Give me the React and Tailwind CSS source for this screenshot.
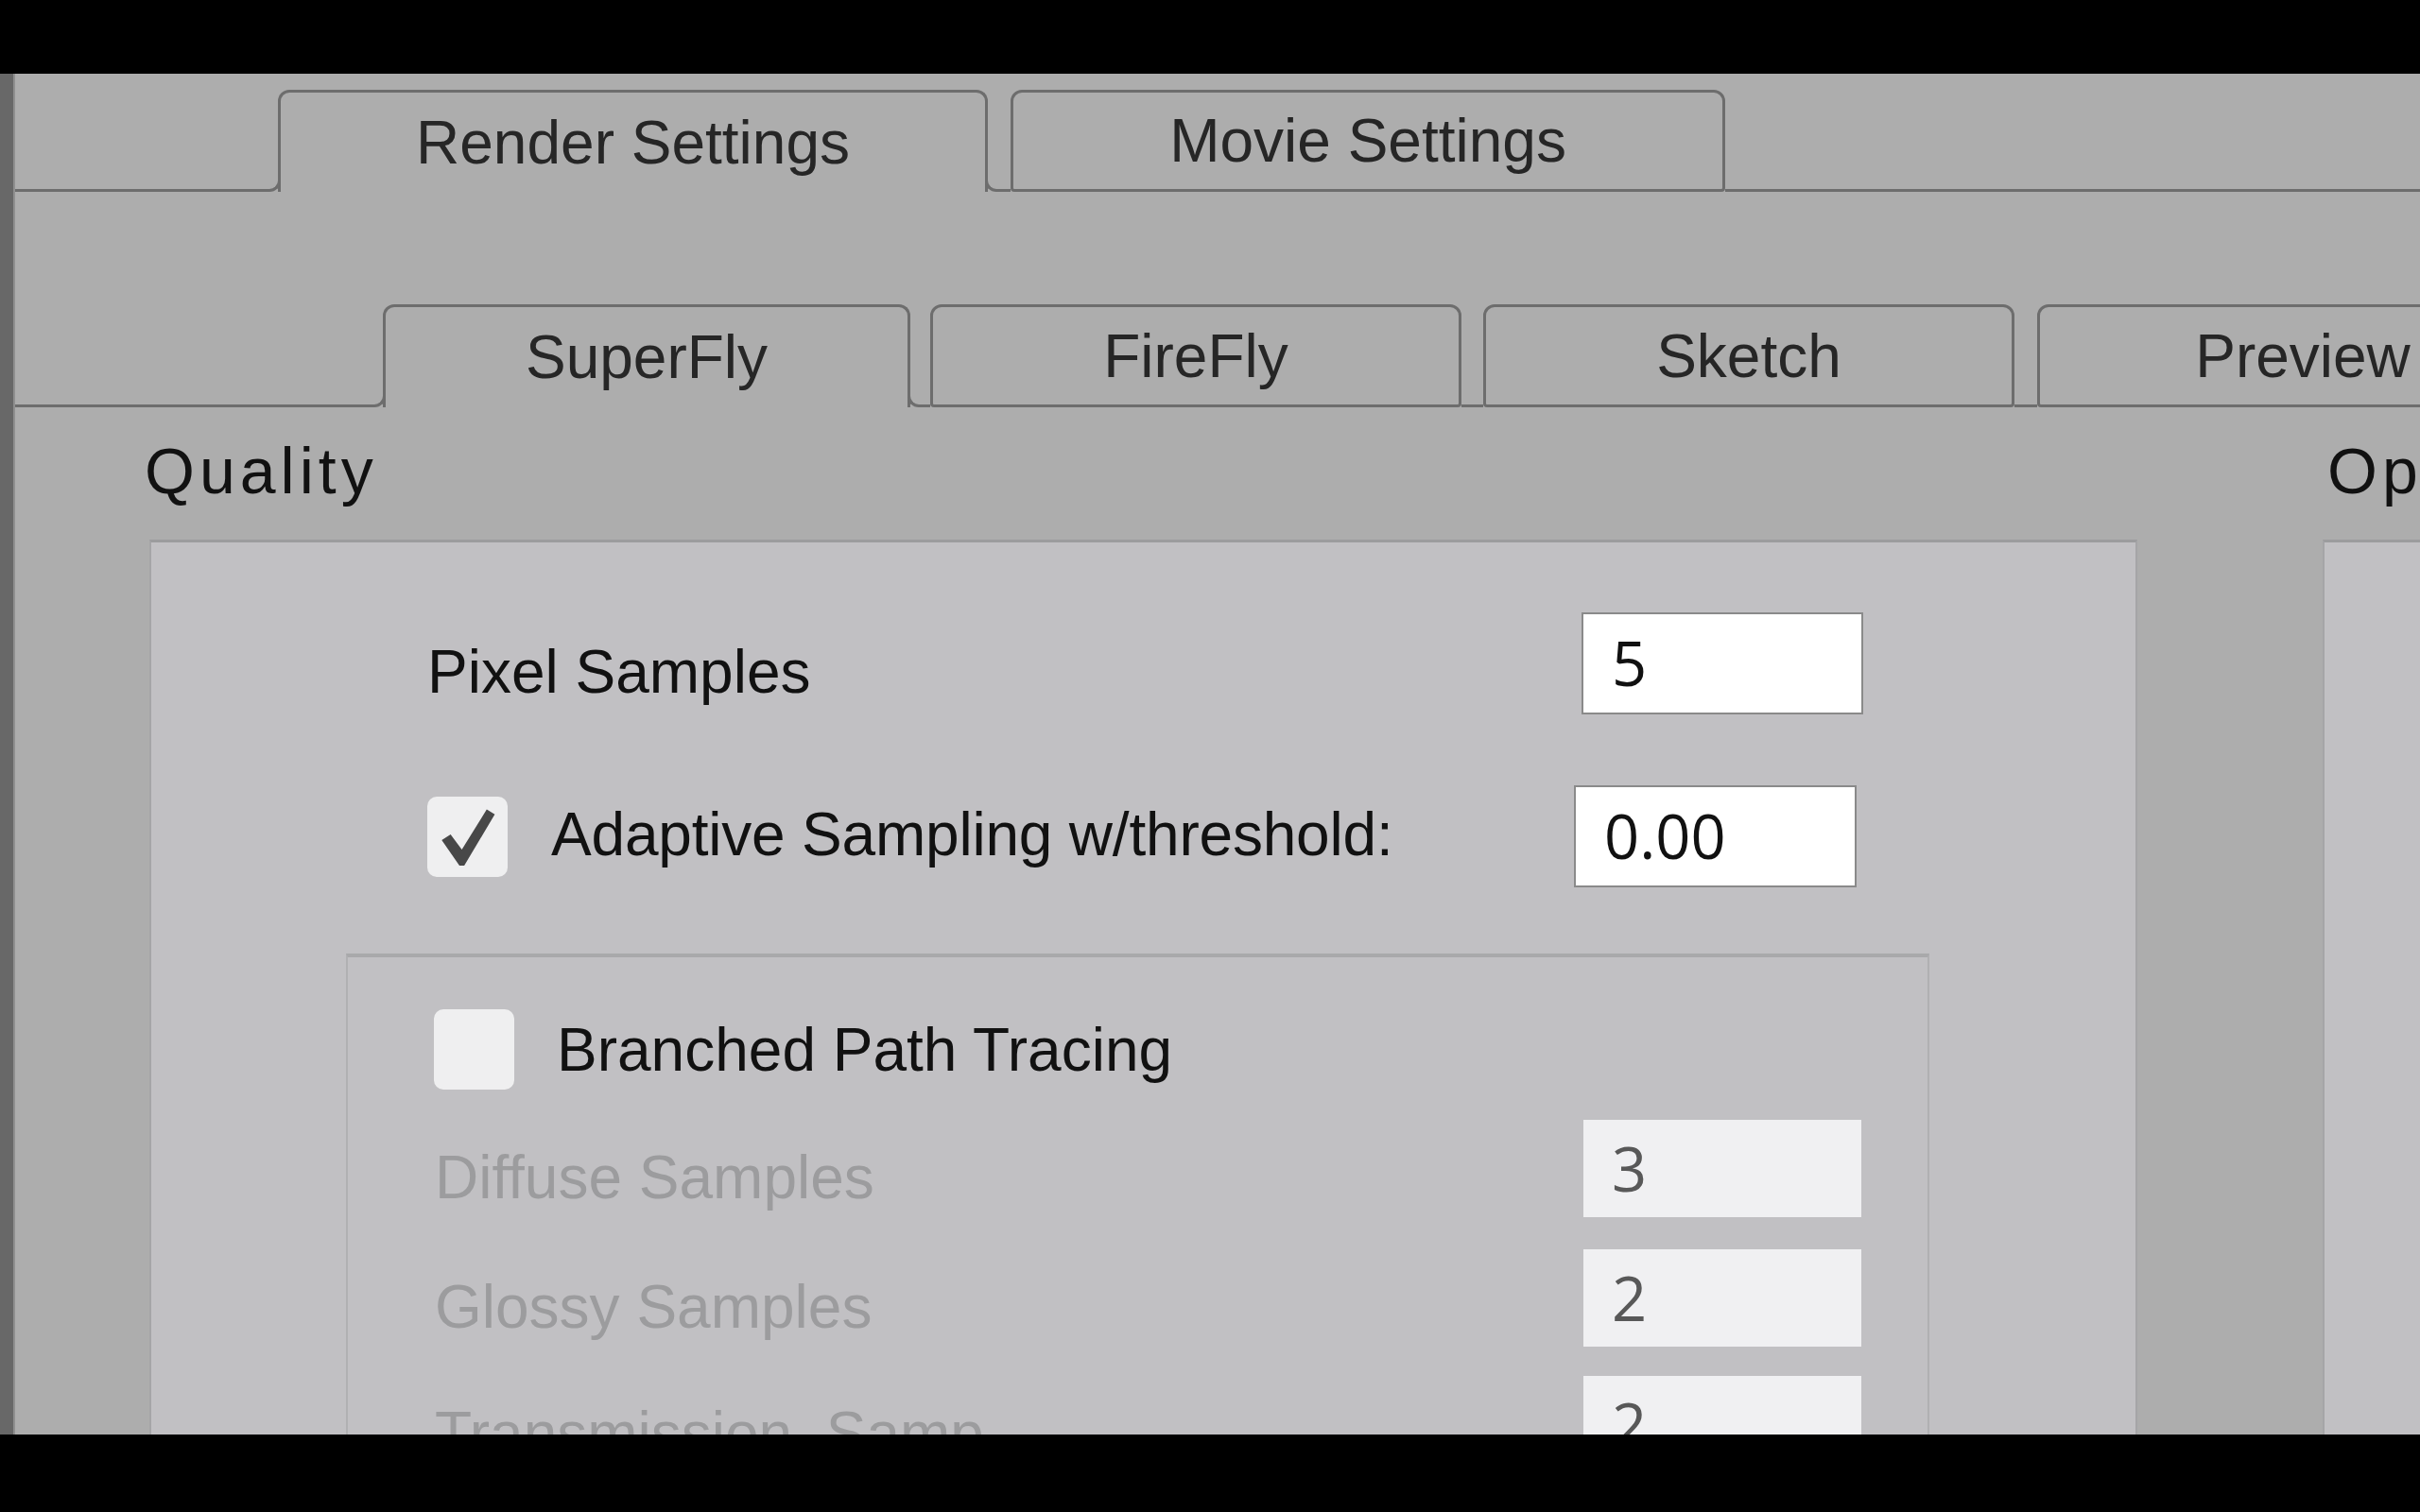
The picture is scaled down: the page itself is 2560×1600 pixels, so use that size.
import React from 'react';

// --- TAB STRIP ---
const LINE = 'border-[#6d6d6d]';

const TabStrip = ({ lead, tabs, className }) => (
  <div className={`flex items-end flex-none overflow-hidden ${className}`}>
    <div className={`${lead} flex-none h-[24px] border-b-[3px] border-r-[3px] ${LINE} rounded-br-[12px] -mr-[3px]`} />
    {tabs.map((t, i) => (
      <React.Fragment key={t.label}>
        {t.active ? (
          <div className={`${t.w} flex-none h-full border-[3px] border-b-0 ${LINE} rounded-t-[12px] flex items-center justify-center text-[64px] text-[#262626]`}>
            {t.label}
          </div>
        ) : (
          <div className={`${t.w} flex-none h-full border-[3px] ${LINE} rounded-t-[12px] rounded-b-[4px] flex items-center justify-center text-[64px] text-[#262626] whitespace-nowrap`}>
            {t.label}
          </div>
        )}
        {i < tabs.length - 1 && (
          t.active ? (
            <div className={`${t.gap} flex-none h-[24px] border-b-[3px] border-l-[3px] ${LINE} rounded-bl-[12px] -ml-[3px]`} />
          ) : (
            <div className={`${t.gap} flex-none h-[3px] bg-[#6d6d6d]`} />
          )
        )}
      </React.Fragment>
    ))}
    <div className="flex-1 min-w-0 h-[3px] bg-[#6d6d6d]" />
  </div>
);

const Check = ({ checked }) => (
  <div className="w-[85px] h-[85px] flex-none rounded-[10px] bg-[#efeff0] flex items-center justify-center">
    {checked && (
      <svg viewBox="0 0 100 100" className="w-[85px] h-[85px]">
        <path d="M18 54 L29 47 L43 66 L74 16 L84 22 L46 86 L40 86 Z" fill="#484848" />
      </svg>
    )}
  </div>
);

const Field = ({ value, w, h, disabled }) => (
  <div
    className={`${w} ${h} flex-none flex items-center pl-[30px] text-[65px] [font-family:'Open_Sans',sans-serif] ${
      disabled ? 'bg-[#f0f0f2] text-[#585858]' : 'bg-white border-2 border-[#8a8a8a] text-[#111]'
    }`}
  >
    {value}
  </div>
);

export default function App() {
  const row1 = [
    { label: 'Render Settings', w: 'w-[751px]', gap: 'w-[27px]', active: true },
    { label: 'Movie Settings', w: 'w-[756px]' },
  ];
  const row2 = [
    { label: 'SuperFly', w: 'w-[558px]', gap: 'w-[24px]', active: true },
    { label: 'FireFly', w: 'w-[562px]', gap: 'w-[23px]' },
    { label: 'Sketch', w: 'w-[562px]', gap: 'w-[24px]' },
    { label: 'Preview', w: 'w-[562px]' },
  ];

  return (
    <div className="w-[2560px] h-[1600px] bg-black flex flex-col overflow-hidden [font-family:'Liberation_Sans',Arial,sans-serif]">
      <div className="h-[78px] flex-none bg-black" />

      <div className="h-[1440px] flex-none flex bg-[#adadad] overflow-hidden">
        <div className="w-[16px] flex-none bg-[#686868] border-r-2 border-[#8f8f8f]" />

        <div className="flex-1 min-w-0 flex flex-col">
          <TabStrip lead="w-[281px]" tabs={row1} className="h-[108px] mt-[17px]" />
          <TabStrip lead="w-[392px]" tabs={row2} className="h-[109px] mt-[119px]" />

          <div className="flex mt-[33px] pl-[137px]">
            {/* Quality column */}
            <div className="flex flex-col flex-none w-[2108px]">
              <h2 className="text-[68px] leading-none tracking-[5px] text-[#111]">Quality</h2>
              <div className="ml-[5px] mt-[39px] w-[2103px] h-[1100px] bg-[#c1c0c3] border-t-[3px] border-t-[#9c9c9e] border-x-2 border-x-[#a5a5a7] flex flex-col text-[64px] text-[#111]">
                <div className="mt-[74px] h-[108px] w-[1811px] pl-[292px] flex items-center justify-between">
                  <span className="pt-[18px]">Pixel Samples</span>
                  <Field value="5" w="w-[298px]" h="h-[108px]" />
                </div>

                <div className="mt-[75px] h-[108px] w-[1804px] pl-[292px] flex items-center">
                  <Check checked />
                  <span className="ml-[46px] -mt-[4px] tracking-[-0.2px]">Adaptive Sampling w/threshold:</span>
                  <div className="flex-1" />
                  <Field value="0.00" w="w-[299px]" h="h-[108px]" />
                </div>

                {/* Branched path tracing group */}
                <div className="mt-[70px] ml-[206px] w-[1675px] h-[700px] border-t-[4px] border-t-[#a9a9ab] border-x-2 border-x-[#b0b0b2] flex flex-col">
                  <div className="mt-[55px] h-[85px] pl-[91px] flex items-center">
                    <Check />
                    <span className="ml-[45px]">Branched Path Tracing</span>
                  </div>
                  {[
                    ['Diffuse Samples', '3', 'mt-[32px]'],
                    ['Glossy Samples', '2', 'mt-[34px]'],
                    ['Transmission  Samp', '2', 'mt-[31px]'],
                  ].map(([label, v, mt]) => (
                    <div key={label} className={`${mt} h-[103px] w-[1601px] pl-[92px] flex items-center justify-between`}>
                      <span className="pt-[18px] whitespace-pre text-[#9c9c9e]">{label}</span>
                      <Field value={v} w="w-[294px]" h="h-[103px]" disabled />
                    </div>
                  ))}
                </div>
              </div>
            </div>

            {/* Options column */}
            <div className="flex flex-col flex-none w-[500px] ml-[196px]">
              <h2 className="pl-[5px] text-[68px] leading-none tracking-[5px] text-[#111] whitespace-nowrap">Options</h2>
              <div className="mt-[39px] w-[500px] h-[1100px] bg-[#c1c0c3] border-t-[3px] border-t-[#9c9c9e] border-l-2 border-l-[#a5a5a7]" />
            </div>
          </div>
        </div>
      </div>

      <div className="flex-1 bg-black" />
    </div>
  );
}
